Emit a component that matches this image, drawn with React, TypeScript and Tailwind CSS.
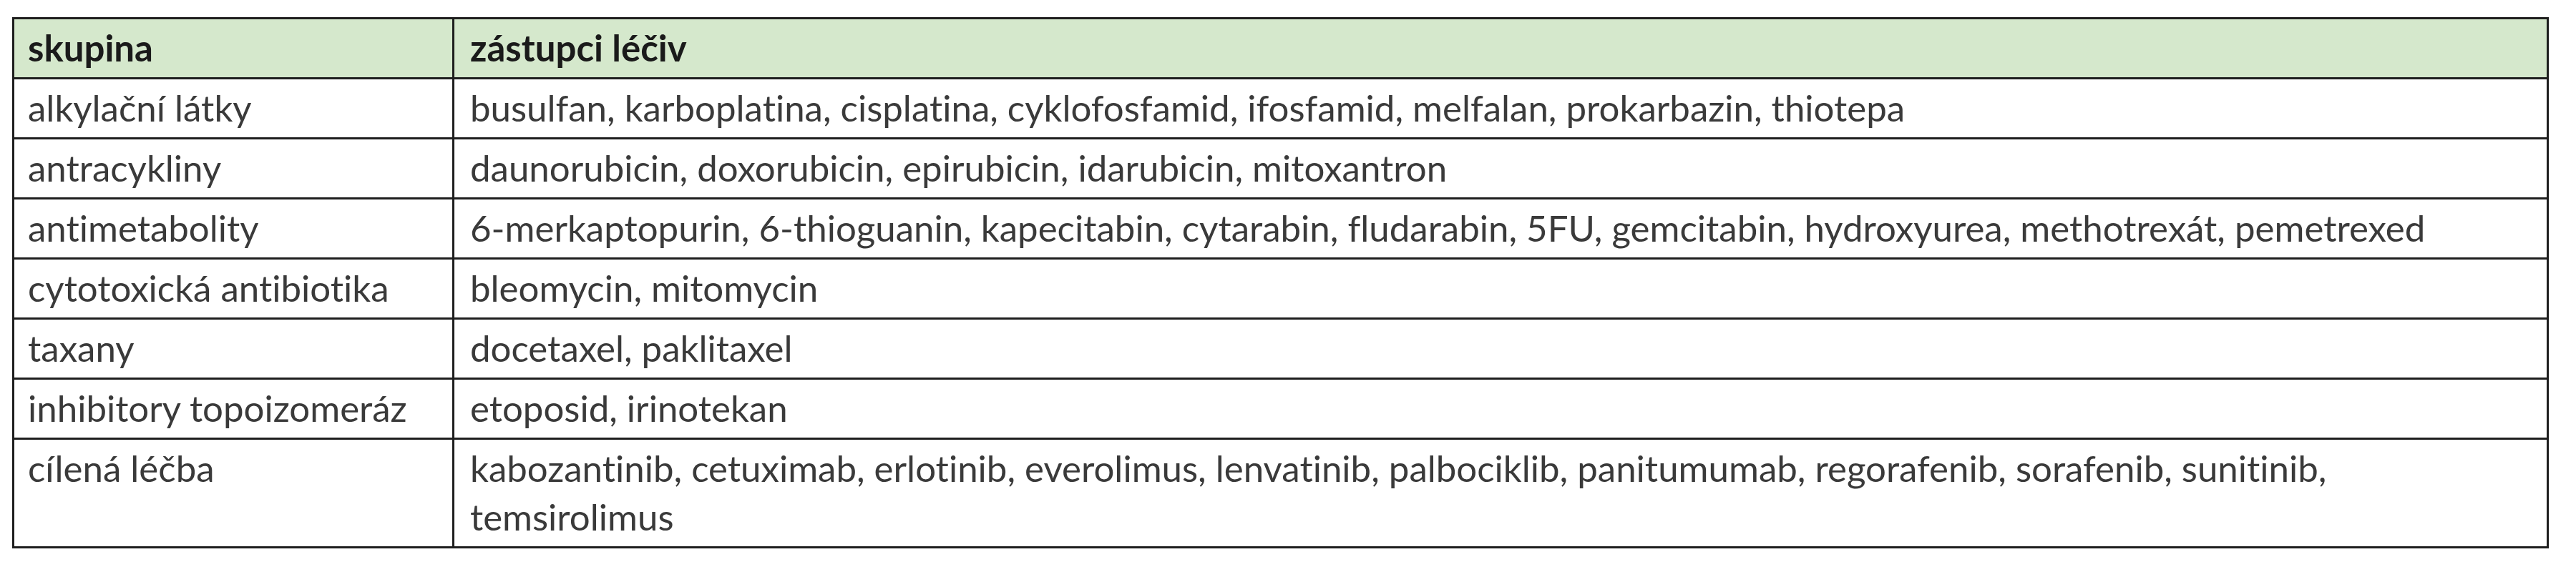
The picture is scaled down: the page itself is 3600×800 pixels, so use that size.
import React from "react";

const rows: [string, string][] = [
  ["alkylační látky", "busulfan, karboplatina, cisplatina, cyklofosfamid, ifosfamid, melfalan, prokarbazin, thiotepa"],
  ["antracykliny", "daunorubicin, doxorubicin, epirubicin, idarubicin, mitoxantron"],
  ["antimetabolity", "6-merkaptopurin, 6-thioguanin, kapecitabin, cytarabin, fludarabin, 5FU, gemcitabin, hydroxyurea, methotrexát, pemetrexed"],
  ["cytotoxická antibiotika", "bleomycin, mitomycin"],
  ["taxany", "docetaxel, paklitaxel"],
  ["inhibitory topoizomeráz", "etoposid, irinotekan"],
  ["cílená léčba", "kabozantinib, cetuximab, erlotinib, everolimus, lenvatinib, palbociklib, panitumumab, regorafenib, sorafenib, sunitinib, temsirolimus"],
];

export default function App() {
  return (
    <div className="bg-white w-[3600px] h-[800px] pt-[24px] pl-[17px] font-['Lato',sans-serif] text-[51px] leading-[68px] [font-variant-ligatures:none]">
      <div className="w-[3545px] border-[3px] border-[#1e1e1e]">
        <div className="grid grid-cols-[615px_1fr] bg-[#d5e8cc] text-[#1a1a1a] font-bold">
          <div className="border-r-[3px] border-[#1e1e1e] pl-[19px] pr-[10px] pt-[6px] pb-[7px]">skupina</div>
          <div className="pl-[22px] pr-[20px] pt-[6px] pb-[7px]">zástupci léčiv</div>
        </div>
        {rows.map(([a, b]) => (
          <div key={a} className="grid grid-cols-[615px_1fr] border-t-[3px] border-[#1e1e1e] text-[#3a3a3a]">
            <div className="border-r-[3px] border-[#1e1e1e] pl-[19px] pr-[10px] pt-[6px] pb-[7px]">{a}</div>
            <div className="pl-[22px] pr-[20px] pt-[6px] pb-[7px]">{b}</div>
          </div>
        ))}
      </div>
    </div>
  );
}
